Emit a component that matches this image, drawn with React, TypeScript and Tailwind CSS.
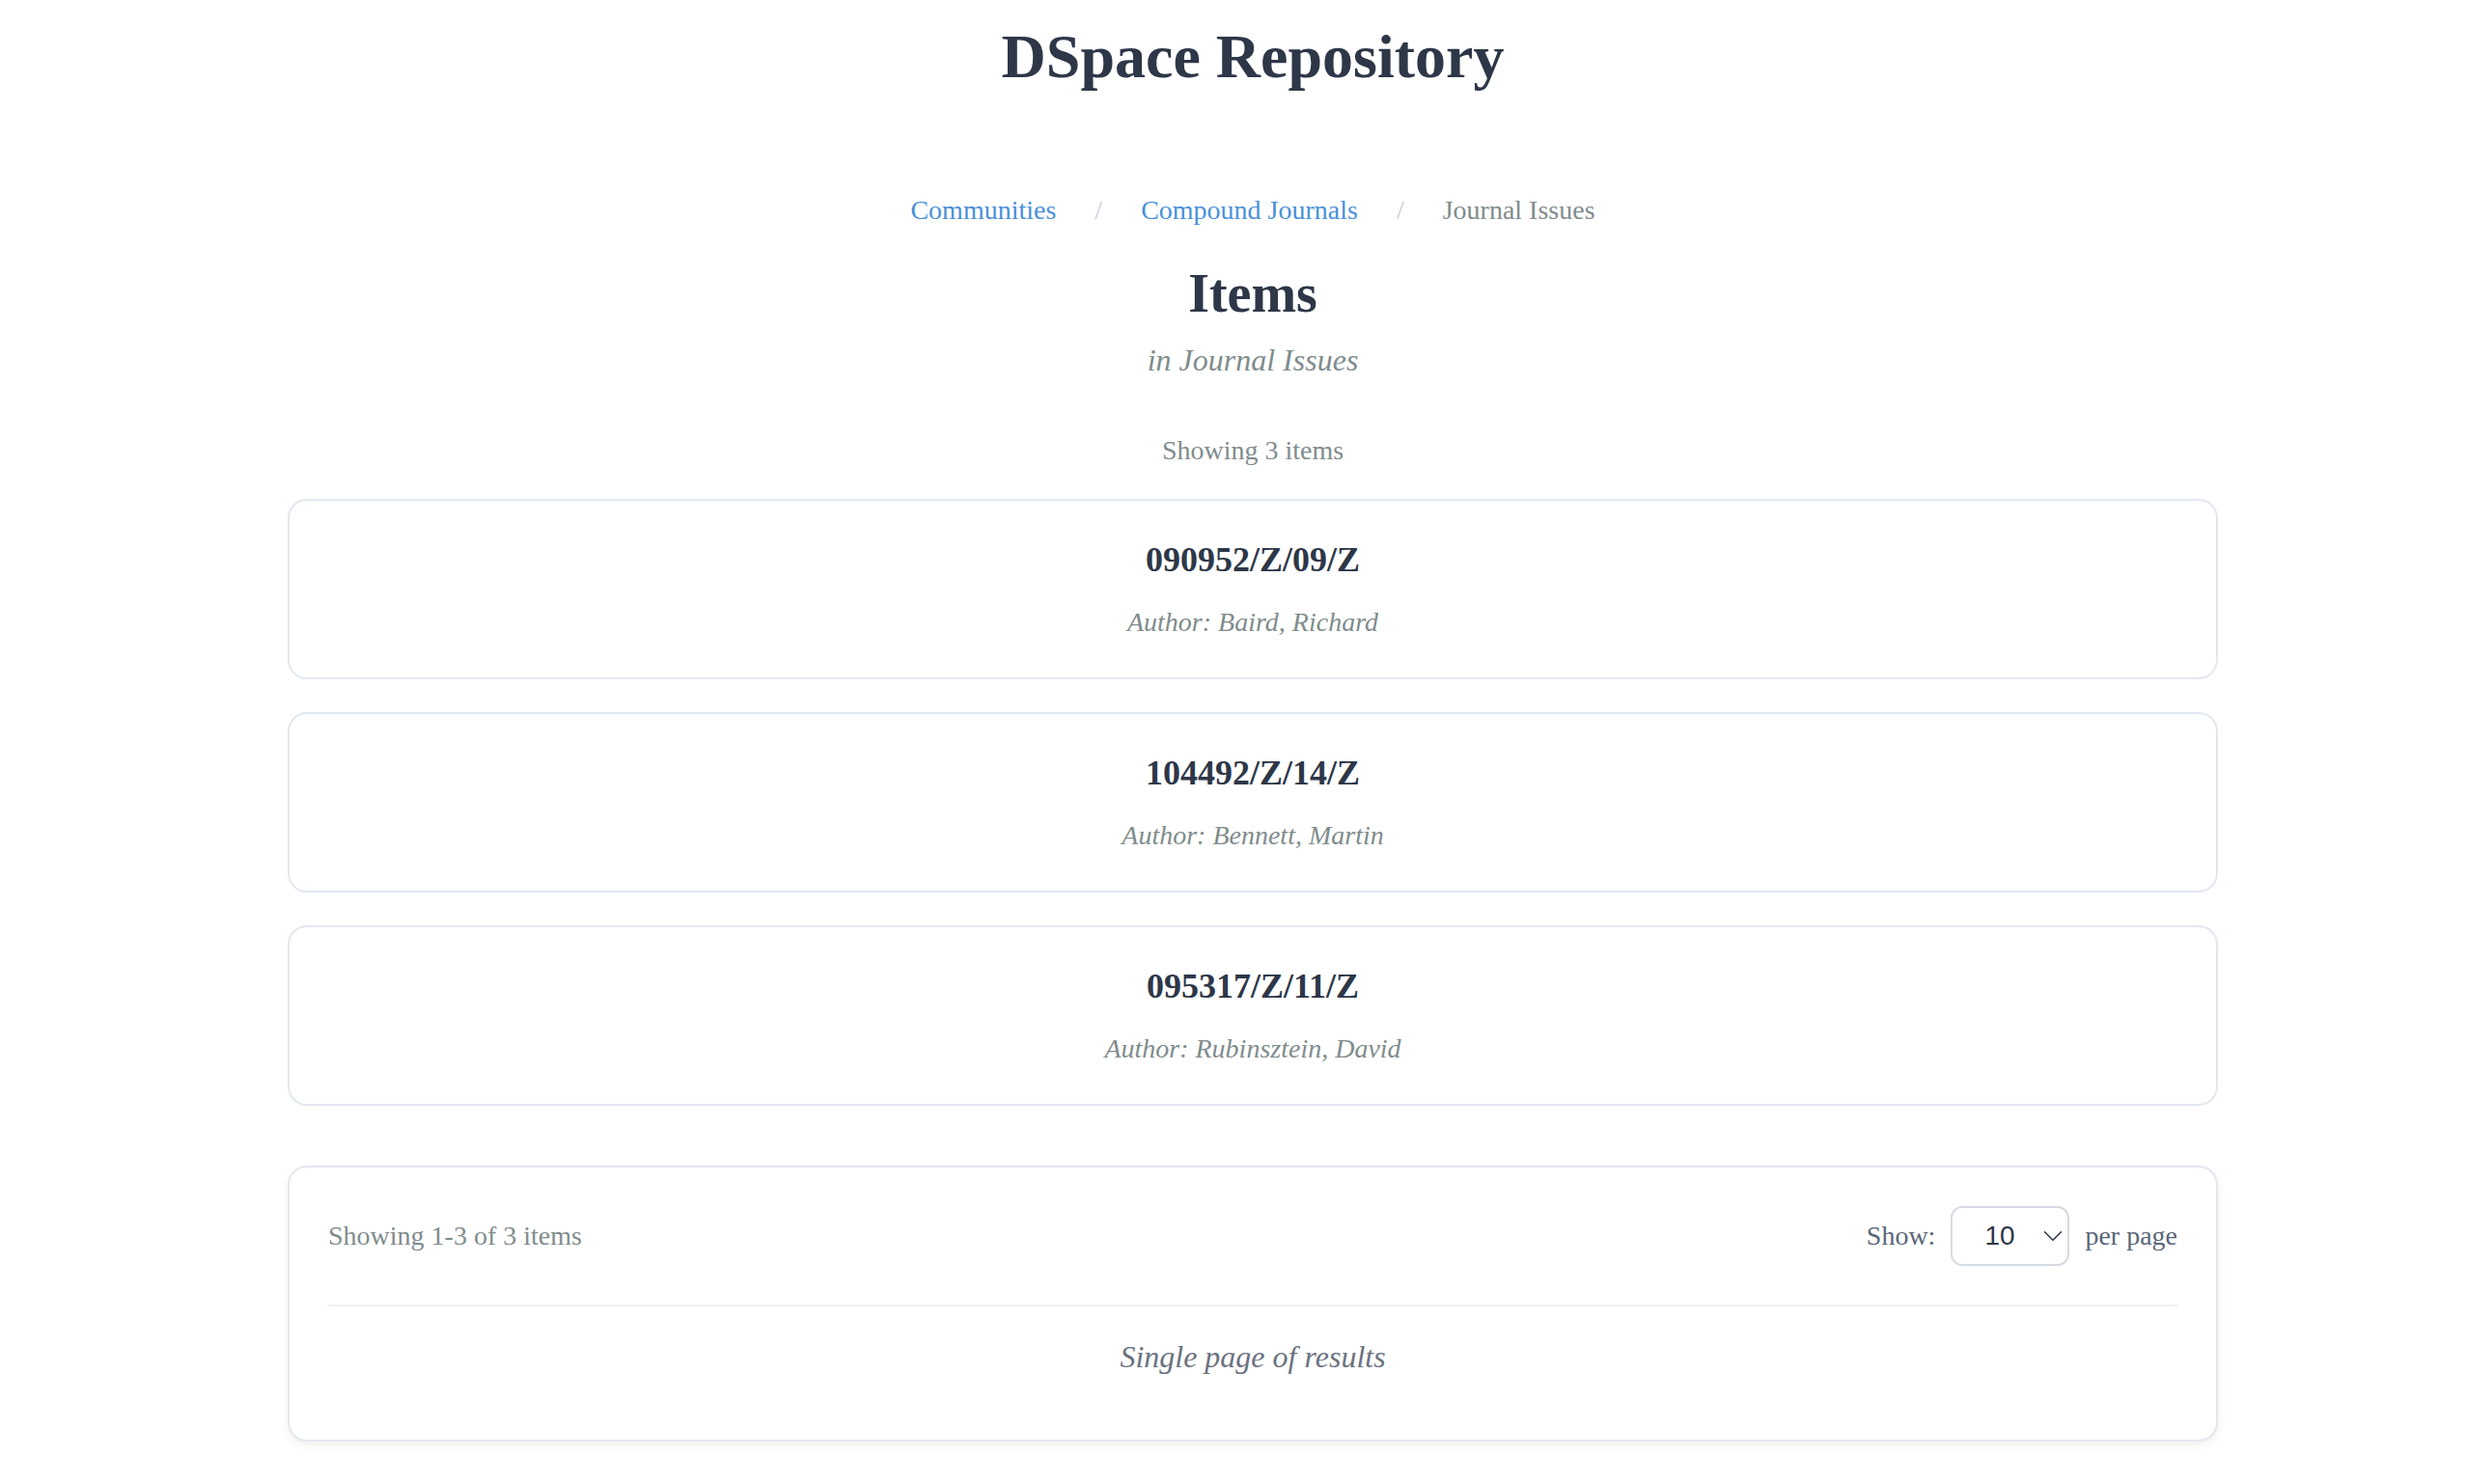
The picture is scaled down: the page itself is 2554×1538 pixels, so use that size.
import { ChevronDown } from 'lucide-react';

const items = [
  { id: '090952/Z/09/Z', author: 'Baird, Richard' },
  { id: '104492/Z/14/Z', author: 'Bennett, Martin' },
  { id: '095317/Z/11/Z', author: 'Rubinsztein, David' },
];

const serif = "font-['Liberation_Serif','Times_New_Roman',serif]";

const ItemCard: React.FC<{ id: string; author: string }> = ({ id, author }) => {
  return (
    <div className="rounded-[20px] border-2 border-[#e2e8f0] bg-white px-10 pt-[39px] pb-[36px] text-center">
      <h3 className="text-[36px] font-bold leading-[44px] text-[#2d3748]">{id}</h3>
      <p className="mt-[22px] text-[28px] italic leading-[42px] text-[#7f8c8d]">Author: {author}</p>
    </div>
  );
};

export default function App() {
  return (
    <div className={`min-h-screen bg-white pl-[42px] ${serif}`}>
      <header className="pt-[20px] text-center">
        <h1 className="text-[64px] font-bold leading-[77px] text-[#2d3748]">DSpace Repository</h1>
      </header>

      <nav className="mt-[100px] flex items-center justify-center gap-10 text-[28px] leading-[42px]">
        <a href="#" className="text-[#4a90d9]">Communities</a>
        <span className="text-[#c8ced6]">/</span>
        <a href="#" className="text-[#4a90d9]">Compound Journals</a>
        <span className="text-[#c8ced6]">/</span>
        <span className="text-[#7f8c8d]">Journal Issues</span>
      </nav>

      <div className="mt-[32px] text-center">
        <h2 className="text-[56px] font-bold leading-[67px] text-[#2d3748]">Items</h2>
        <p className="mt-[11px] text-[32px] italic leading-[48px] text-[#7f8c8d]">in Journal Issues</p>
        <p className="mt-[49px] text-[28px] leading-[42px] text-[#7f8c8d]">Showing 3 items</p>
      </div>

      <main className="mx-auto mt-[29px] flex w-[2000px] flex-col gap-[34px]">
        {items.map((item) => (
          <ItemCard key={item.id} id={item.id} author={item.author} />
        ))}

        <section className="mt-[28px] mb-[40px] rounded-[20px] border-2 border-[#e2e8f0] bg-white px-10 pt-10 pb-[62px] shadow-[0_4px_10px_rgba(0,0,0,0.06)]">
          <div className="flex items-center justify-between border-b-2 border-[#eef1f6] pb-10">
            <span className="text-[28px] text-[#7f8c8d]">Showing 1-3 of 3 items</span>
            <div className="flex items-center gap-4 text-[28px] text-[#5a6678]">
              <span>Show:</span>
              <div className="relative">
                <select
                  defaultValue="10"
                  className="h-[62px] w-[123px] appearance-none rounded-[12px] border-2 border-[#d5dbe3] bg-white pl-[33px] font-['Liberation_Sans',Arial,sans-serif] text-[28px] text-[#2d3748]"
                >
                  <option value="10">10</option>
                  <option value="20">20</option>
                  <option value="50">50</option>
                </select>
                <ChevronDown className="pointer-events-none absolute right-0 top-[14px] h-[34px] w-[34px] text-[#2d3748]" strokeWidth={1.1} />
              </div>
              <span>per page</span>
            </div>
          </div>
          <p className="pt-[28px] text-center text-[32px] italic leading-[48px] text-[#6b7280]">Single page of results</p>
        </section>
      </main>
    </div>
  );
}
